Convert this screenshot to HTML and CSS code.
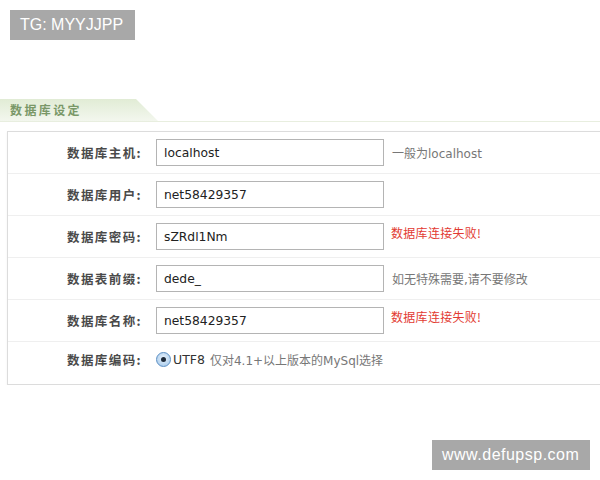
FILE: index.html
```html
<!DOCTYPE html>
<html lang="zh-CN">
<head>
  <meta charset="UTF-8" />
  <title>数据库设定</title>
  <link rel="stylesheet" href="styles.css">
</head>
<body>
  <div class="mark mark-top">TG: MYYJJPP</div>

  <div class="section">
    <div class="section-head">
      <div class="section-tab">数据库设定</div>
    </div>

    <div class="panel">
      <div class="row">
        <label class="row-label">数据库主机:</label>
        <input class="field" type="text" value="localhost" />
        <span class="hint">一般为localhost</span>
      </div>
      <div class="row">
        <label class="row-label">数据库用户:</label>
        <input class="field" type="text" value="net58429357" />
      </div>
      <div class="row">
        <label class="row-label">数据库密码:</label>
        <input class="field" type="text" value="sZRdl1Nm" />
        <span class="error">数据库连接失败!</span>
      </div>
      <div class="row">
        <label class="row-label">数据表前缀:</label>
        <input class="field" type="text" value="dede_" />
        <span class="hint">如无特殊需要,请不要修改</span>
      </div>
      <div class="row">
        <label class="row-label">数据库名称:</label>
        <input class="field" type="text" value="net58429357" />
        <span class="error">数据库连接失败!</span>
      </div>
      <div class="row row-last">
        <label class="row-label">数据库编码:</label>
        <span class="radio"><span class="radio-dot"></span></span>
        <span class="radio-text">UTF8</span>
        <span class="hint hint-radio">仅对4.1+以上版本的MySql选择</span>
      </div>
    </div>
  </div>

  <div class="mark mark-bottom">www.defupsp.com</div>
</body>
</html>
```

FILE: styles.css
```css
body {
  margin: 0;
  background: #fff;
  font-family: "Noto Sans CJK SC", sans-serif;
  color: #333;
  overflow: hidden;
}

.mark {
  position: absolute;
  background: #a8a8a8;
  color: #fff;
  font-family: "Liberation Sans", Arial, sans-serif;
  font-size: 16px;
  line-height: 30px;
  padding: 0 10px;
}

.mark-top {
  top: 10px;
  left: 10px;
  width: 105px;
}

.mark-bottom {
  top: 440px;
  left: 432px;
  width: 138px;
  letter-spacing: 0.5px;
}

.section {
  padding-top: 99px;
}

.section-head {
  height: 22px;
  border-bottom: 1px solid #e8eedf;
}

.section-tab {
  width: 158px;
  height: 22px;
  padding-left: 10px;
  box-sizing: border-box;
  background: linear-gradient(to bottom, #e1ecd5, #f3f7ee);
  clip-path: polygon(0 0, 136px 0, 158px 100%, 0 100%);
  color: #7a9868;
  font-size: 12px;
  font-weight: bold;
  letter-spacing: 2.4px;
  line-height: 22px;
}

.panel {
  margin: 9px -20px 0 7px;
  border: 1px solid #dcdcdc;
  box-shadow: 0 1px 2px rgba(0, 0, 0, 0.06);
  background: #fff;
}

.row {
  display: flex;
  align-items: center;
  height: 41px;
  border-bottom: 1px solid #efefef;
}

.row-last {
  border-bottom: none;
  height: 42px;
  padding-bottom: 8px;
  box-sizing: border-box;
}

.row-label {
  width: 134px;
  flex: none;
  text-align: right;
  font-size: 12.5px;
  font-weight: bold;
  letter-spacing: 1.4px;
  color: #4a4a4a;
  margin-right: 14px;
}

.field {
  width: 228px;
  height: 27px;
  box-sizing: border-box;
  border: 1px solid #b4b4b4;
  padding: 0 7px;
  margin: 0;
  font-family: "DejaVu Sans", sans-serif;
  font-size: 12.3px;
  color: #222;
  outline: none;
}

.hint {
  margin-left: 8px;
  font-family: "DejaVu Sans", "Noto Sans CJK SC", sans-serif;
  font-size: 12px;
  color: #777;
}

.error {
  margin-left: 7px;
  margin-top: -8px;
  font-size: 12px;
  color: #e23a32;
  letter-spacing: 0.3px;
}

.radio {
  width: 13px;
  height: 13px;
  border-radius: 50%;
  border: 1px solid #5b8fc4;
  background: radial-gradient(circle at 50% 40%, #e9f3fc, #9cc3e8);
  display: flex;
  align-items: center;
  justify-content: center;
  flex: none;
}

.radio-dot {
  width: 5px;
  height: 5px;
  border-radius: 50%;
  background: #1d2a3a;
}

.radio-text {
  margin-left: 2px;
  font-family: "DejaVu Sans", sans-serif;
  font-size: 12.5px;
  color: #333;
}

.hint-radio {
  margin-left: 5px;
}
```
